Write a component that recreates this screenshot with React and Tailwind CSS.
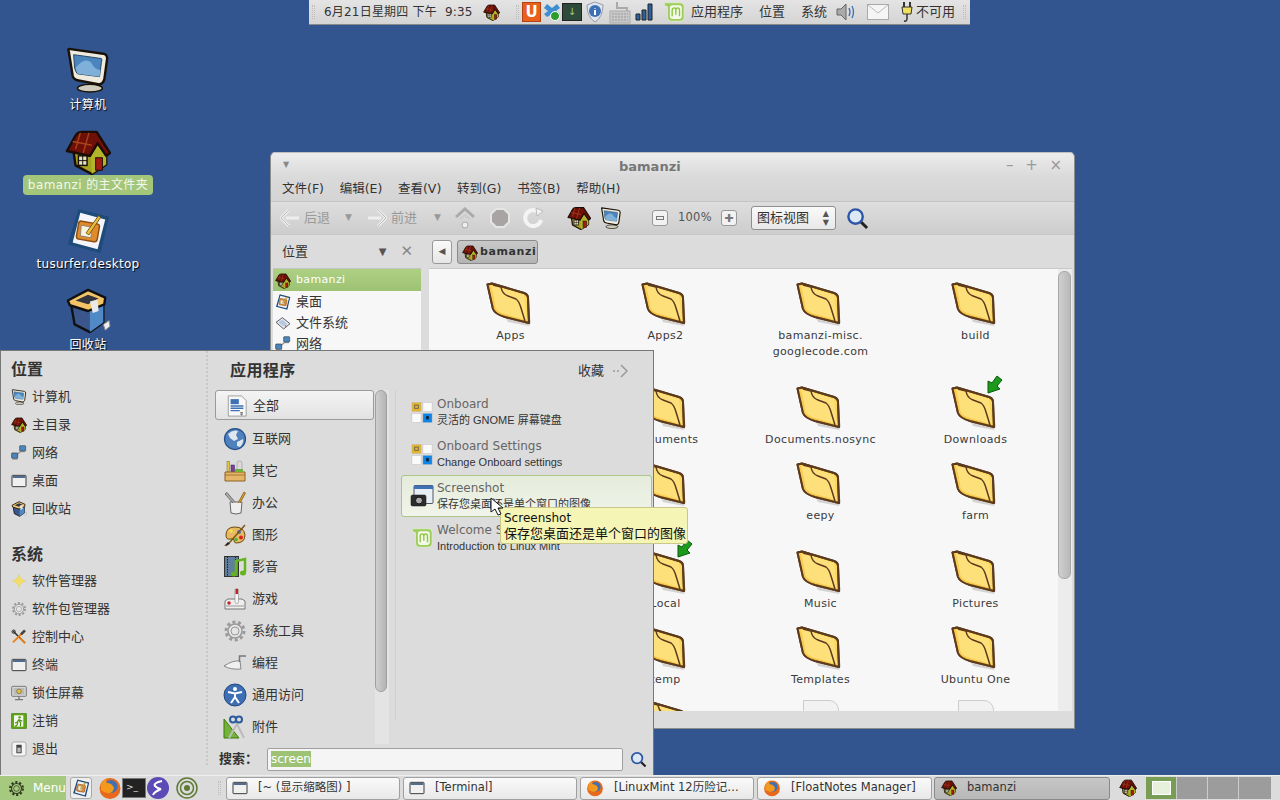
const Svg = ({ size = 16, w, h, className = "", children }) => (
  <svg width={w || size} height={h || size} viewBox="0 0 48 48" className={`shrink-0 ${className}`}>
    {children}
  </svg>
);

// folder from the gnome-colors style theme
const FolderIcon = () => (
  <svg width="46" height="44" viewBox="0 0 46 44" className="shrink-0">
    <path d="M5 5 L40 16 L45 40 L43 44 L22 40 Z" fill="#bbb" opacity=".6" />
    <path d="M1.5 2.5 L6 1.5 L38 11 Q42 12.5 42 16 L43 41 L19 35 Q9 32 7 27 Z" fill="#fbd75b" stroke="#5c3a1e" strokeWidth="2" strokeLinejoin="round" />
    <path d="M3 4 L12 5 L38 13 L41 39 L20 33 Q10 30 8 26 Z" fill="#fde07a" />
    <path d="M3 3 Q5 8 7 20 L8 26 Q10 31 20 34 L41 40" fill="none" stroke="#f7c23e" strokeWidth="3" opacity=".7" />
    <path d="M7 3 L15 5 Q16 12 22 14 L30 17 Q33 19 35 26 L39 39" fill="none" stroke="#5c3a1e" strokeWidth="1.5" />
    <path d="M1.5 2.5 L6 1.5 L38 11 Q42 12.5 42 16 L43 41 L19 35 Q9 32 7 27 Z" fill="none" stroke="#5c3a1e" strokeWidth="2" strokeLinejoin="round" />
  </svg>
);

const ArrowBadge = ({ className = "" }) => (
  <svg width="17" height="19" viewBox="0 0 17 19" className={className}>
    <path d="M11 1 L16 5 L11 11 L14 14 L2 18 L2 6 L6 8 Z" fill="#1c9a1c" stroke="#0b5a0b" strokeWidth="1" />
  </svg>
);

const HouseIcon = ({ size = 16 }) => (
  <Svg size={size}>
    <path d="M9 24 L26 28 L34 14 L43 27 V37 L28 47 L11 38 Z" fill="#a3a321" stroke="#1a0d05" strokeWidth="2.5" strokeLinejoin="round" />
    <path d="M28 47 L27 29 L34 16 L43 27 V37 Z" fill="#b4b42a" />
    <path d="M2 23 L11 7 Q13 3 18 3 L33 3 L47 25 L43 28 L34 15 L26 28 Z" fill="#6e0f08" stroke="#1a0d05" strokeWidth="2.5" strokeLinejoin="round" />
    <path d="M8 13 L28 17 M16 4 L11 21 M25 4 L19 25" stroke="#a8431a" strokeWidth="1.5" />
    <rect x="14" y="28" width="9" height="10" fill="#dfe6c8" stroke="#1a0d05" strokeWidth="1.5" />
    <path d="M18.5 28 V38 M14 33 H23" stroke="#1a0d05" strokeWidth="1" />
    <rect x="32" y="30" width="7" height="13" fill="#a31b12" stroke="#1a0d05" strokeWidth="1" />
  </Svg>
);

const MonitorIcon = ({ size = 16 }) => (
  <Svg size={size}>
    <ellipse cx="26" cy="43" rx="13" ry="4" fill="#cfccbd" stroke="#1a1208" strokeWidth="1.5" />
    <path d="M4 2 Q3 2 4 5 L8 30 Q9 34 14 35 L36 39 Q40 38 41 34 L44 12 Q44 8 40 7 Z" fill="#efecdf" stroke="#1a1208" strokeWidth="2.5" strokeLinejoin="round" />
    <path d="M9 8 L38 12 Q39 13 38 16 L36 31 L13 28 Q11 26 10 22 Z" fill="#4a86bd" stroke="#28435f" strokeWidth="1" />
    <path d="M11 22 Q20 10 27 16 Q31 24 37 24 L36 31 L13 28 Z" fill="#7fb0d9" />
  </Svg>
);

const NoteIcon = ({ size = 16 }) => (
  <Svg size={size}>
    <path d="M14 1 L46 9 L37 47 L3 38 Z" fill="#1d4b7a" />
    <path d="M16 5 L42 12 L34 43 L8 36 Z" fill="#f3f5fb" />
    <rect x="13" y="15" width="22" height="19" rx="3" fill="#e08a2c" stroke="#8b4f12" strokeWidth="1.5" transform="rotate(10 24 24)" />
    <path d="M17 18 L28 20 L27 31 L16 29 Z" fill="#f7f2dd" stroke="#777" strokeWidth=".8" />
    <path d="M22 26 L35 8 L37 10 L25 28 Z" fill="#e9c142" stroke="#7d5514" strokeWidth="1" />
  </Svg>
);

const TrashIcon = ({ size = 16 }) => (
  <Svg size={size}>
    <path d="M6 15 L10 38 L26 46 L40 36 L40 14 Z" fill="#3b568d" stroke="#111" strokeWidth="2.5" strokeLinejoin="round" />
    <path d="M26 22 L40 14 L40 36 L26 46 Z" fill="#4f8ac6" />
    <path d="M3 13 L24 2 L42 10 L41 17 L24 24 L5 18 Z" fill="#f3c566" stroke="#111" strokeWidth="2.5" strokeLinejoin="round" />
    <path d="M11 13 L24 7 L35 11 L24 17 Z" fill="#33363e" />
    <path d="M26 14 L34 12 L35 24 L29 26 Z" fill="#e9e9e9" />
    <path d="M40 38 L46 34 L47 40 L42 44 Z" fill="#eee" stroke="#888" />
  </Svg>
);

const NetworkIcon = ({ size = 16 }) => (
  <Svg size={size}>
    <path d="M14 32 L34 14" stroke="#999" strokeWidth="4" />
    <rect x="26" y="2" width="18" height="16" rx="2" fill="#4a86bd" stroke="#444" strokeWidth="2" />
    <rect x="2" y="24" width="18" height="16" rx="2" fill="#4a86bd" stroke="#333" strokeWidth="2" />
    <path d="M4 42 H20 M28 20 H42" stroke="#777" strokeWidth="3" />
  </Svg>
);

const WindowIcon = ({ size = 16 }) => (
  <Svg size={size}>
    <rect x="3" y="7" width="42" height="34" rx="2" fill="#f0f0f0" stroke="#3c3c3c" strokeWidth="3" />
    <rect x="5" y="9" width="38" height="6" fill="#4f6d8e" />
  </Svg>
);

const DriveIcon = ({ size = 16 }) => (
  <Svg size={size}>
    <path d="M3 22 L22 8 L45 26 L26 42 Z" fill="#dfe6ee" stroke="#445" strokeWidth="2.5" strokeLinejoin="round" />
    <path d="M10 22 L22 14 L36 26 L26 34 Z" fill="#b7c7dc" />
    <circle cx="32" cy="33" r="2" fill="#d22" />
  </Svg>
);

const StarIcon = ({ size = 16 }) => (
  <Svg size={size}>
    <path d="M24 4 Q26 18 44 24 Q26 30 24 44 Q22 30 4 24 Q22 18 24 4 Z" fill="#f4dc6a" stroke="#dcc45a" strokeWidth="1" />
  </Svg>
);

const GearIcon = ({ size = 16, color = "#9a9a9a", fill = "#e5e5e5" }) => (
  <Svg size={size}>
    <circle cx="24" cy="24" r="18" fill="none" stroke={color} strokeWidth="6" strokeDasharray="6 5.3" />
    <circle cx="24" cy="24" r="14" fill={fill} stroke={color} strokeWidth="3" />
    <circle cx="24" cy="24" r="8" fill={fill} stroke={color} strokeWidth="2" />
  </Svg>
);

const ToolsIcon = ({ size = 16 }) => (
  <Svg size={size}>
    <path d="M6 6 L42 42" stroke="#333" strokeWidth="5" />
    <path d="M26 26 L42 42" stroke="#e8831e" strokeWidth="6" />
    <path d="M40 6 L6 40" stroke="#e8831e" strokeWidth="6" />
    <path d="M42 4 L30 16" stroke="#444" strokeWidth="8" />
    <circle cx="8" cy="8" r="5" fill="none" stroke="#333" strokeWidth="3" />
  </Svg>
);

const LockIcon = ({ size = 16 }) => (
  <Svg size={size}>
    <rect x="2" y="4" width="44" height="30" rx="3" fill="#d6d6d6" stroke="#666" strokeWidth="2.5" />
    <rect x="8" y="9" width="32" height="20" fill="#bbb" />
    <circle cx="24" cy="19" r="7" fill="#e6c030" stroke="#665" strokeWidth="2" />
    <path d="M24 34 V42 M12 44 H36" stroke="#777" strokeWidth="4" />
  </Svg>
);

const ExitIcon = ({ size = 16 }) => (
  <Svg size={size}>
    <rect x="2" y="2" width="44" height="44" fill="#5ea510" stroke="#3d7a08" strokeWidth="2" />
    <rect x="9" y="7" width="28" height="34" fill="#f4f8ec" />
    <circle cx="26" cy="13" r="3.5" fill="#4d9310" />
    <path d="M25 18 L18 28 L12 30 M24 22 L29 30 L28 40 M21 28 L17 38 L11 40 M26 21 L34 25" stroke="#4d9310" strokeWidth="3.5" fill="none" />
  </Svg>
);

const SwitchIcon = ({ size = 16 }) => (
  <Svg size={size}>
    <rect x="3" y="3" width="42" height="42" rx="6" fill="#f4f4f4" stroke="#8d8d8d" strokeWidth="2" />
    <rect x="16" y="11" width="16" height="26" rx="2" fill="#444" />
    <rect x="19" y="20" width="10" height="14" fill="#bbb" />
  </Svg>
);

const DocIcon = ({ size = 24 }) => (
  <Svg size={size}>
    <path d="M5 2 H34 L44 12 V46 H5 Z" fill="#f8f8f8" stroke="#999" strokeWidth="2" />
    <rect x="10" y="9" width="18" height="11" fill="#3e71b4" />
    <path d="M10 24 H38 M10 29 H38 M10 34 H30" stroke="#3e71b4" strokeWidth="3" />
    <path d="M31 39 H37 M32 43 H36" stroke="#222" strokeWidth="2" />
  </Svg>
);

const GlobeIcon = ({ size = 24 }) => (
  <Svg size={size}>
    <circle cx="24" cy="24" r="21" fill="#4f82bc" stroke="#27508a" strokeWidth="2.5" />
    <path d="M10 14 Q20 4 30 8 L26 16 L30 24 L22 28 L14 22 Z M28 30 L40 24 Q42 32 34 40 L28 38 Z" fill="#dfe6ee" />
  </Svg>
);

const BoxToolsIcon = ({ size = 24 }) => (
  <Svg size={size}>
    <rect x="8" y="5" width="5" height="20" fill="#e4c93c" stroke="#7a6a1e" />
    <rect x="16" y="12" width="7" height="14" fill="#7a3f9c" stroke="#40205a" />
    <rect x="28" y="4" width="10" height="22" rx="4" fill="#d9d9d9" stroke="#888" />
    <path d="M4 26 H44 V44 H4 Z" fill="#e6b567" stroke="#8c6323" strokeWidth="2" />
    <path d="M4 32 H44" stroke="#8c6323" strokeWidth="1.5" />
    <rect x="24" y="20" width="16" height="6" fill="#6fb33c" />
  </Svg>
);

const OfficeIcon = ({ size = 24 }) => (
  <Svg size={size}>
    <path d="M14 22 H38 L36 44 Q26 48 16 44 Z" fill="#eee" stroke="#666" strokeWidth="2" />
    <path d="M20 24 L4 6 L8 3 L24 22" fill="#aaa" stroke="#555" strokeWidth="1.5" />
    <path d="M30 24 L42 2 L45 4 L34 24" fill="#e0a030" stroke="#7d5514" strokeWidth="1.5" />
  </Svg>
);

const PaletteIcon = ({ size = 24 }) => (
  <Svg size={size}>
    <path d="M6 24 Q6 8 24 8 Q42 8 44 24 Q44 40 26 40 Q22 40 22 34 Q20 30 14 32 Q6 34 6 24 Z" fill="#e7b962" stroke="#6e4a12" strokeWidth="2" />
    <circle cx="32" cy="18" r="4" fill="#3d7ec4" /><circle cx="36" cy="29" r="4" fill="#d22" /><circle cx="26" cy="33" r="3.5" fill="#4bb33a" /><circle cx="16" cy="16" r="3.5" fill="#f3e04b" />
    <path d="M6 46 L14 38 L44 4" stroke="#7d5514" strokeWidth="3" fill="none" /><path d="M2 46 L10 38 L14 42 Z" fill="#222" />
  </Svg>
);

const FilmIcon = ({ size = 24 }) => (
  <Svg size={size}>
    <rect x="3" y="3" width="28" height="40" fill="#5f7f9c" stroke="#333" strokeWidth="2" />
    <path d="M9 3 V43 M25 3 V43" stroke="#222" strokeWidth="2" strokeDasharray="3 2" />
    <path d="M26 34 L26 12 L44 8 V34" fill="none" stroke="#65b41c" strokeWidth="5" />
    <ellipse cx="22" cy="38" rx="6" ry="5" fill="#65b41c" /><ellipse cx="40" cy="36" rx="6" ry="5" fill="#65b41c" />
  </Svg>
);

const JoystickIcon = ({ size = 24 }) => (
  <Svg size={size}>
    <path d="M4 28 L10 24 H38 L44 28 V44 H4 Z" fill="#eee" stroke="#777" strokeWidth="2" />
    <rect x="24" y="3" width="7" height="30" rx="3" fill="#f4f4f4" stroke="#777" />
    <rect x="25" y="4" width="5" height="10" fill="#c82020" />
    <circle cx="12" cy="32" r="3.5" fill="#c82020" />
    <path d="M6 38 H42" stroke="#999" strokeWidth="2" />
  </Svg>
);

const TrowelIcon = ({ size = 24 }) => (
  <Svg size={size}>
    <path d="M2 30 Q20 18 34 20 L36 36 Q16 38 2 30 Z" fill="#f0f0f0" stroke="#888" strokeWidth="2" />
    <path d="M33 22 L33 10 H46" fill="none" stroke="#777" strokeWidth="3" />
  </Svg>
);

const AccessIcon = ({ size = 24 }) => (
  <Svg size={size}>
    <circle cx="24" cy="24" r="22" fill="#3e6fb4" stroke="#24477e" strokeWidth="2" />
    <circle cx="24" cy="12" r="4" fill="#fff" />
    <path d="M10 18 L24 21 L38 18 M24 21 V28 L16 40 M24 28 L32 40" stroke="#fff" strokeWidth="4" fill="none" />
  </Svg>
);

const AccessoryIcon = ({ size = 24 }) => (
  <Svg size={size}>
    <path d="M2 8 L32 46 H2 Z" fill="#73b33a" stroke="#3d7a08" strokeWidth="2" />
    <path d="M30 14 L12 46 M26 14 L42 46" stroke="#bbb" strokeWidth="4" />
    <circle cx="32" cy="9" r="6" fill="none" stroke="#2c5c9c" strokeWidth="4" /><circle cx="20" cy="9" r="6" fill="none" stroke="#2c5c9c" strokeWidth="4" />
  </Svg>
);

const OnboardIcon = ({ size = 22 }) => (
  <Svg size={size}>
    <rect x="2" y="3" width="20" height="20" fill="#e5b42c" stroke="#bbb" />
    <rect x="8" y="9" width="8" height="7" fill="none" stroke="#665" strokeWidth="2" />
    <rect x="26" y="3" width="20" height="20" fill="#fafafa" stroke="#bbb" />
    <rect x="2" y="27" width="20" height="20" fill="#fafafa" stroke="#bbb" />
    <rect x="26" y="27" width="20" height="20" fill="#0d84e8" stroke="#bbb" />
    <rect x="33" y="33" width="6" height="7" fill="#123" />
  </Svg>
);

const CameraIcon = ({ size = 24 }) => (
  <Svg size={size}>
    <rect x="8" y="3" width="38" height="36" rx="2" fill="#e8eef5" stroke="#556" strokeWidth="2" />
    <rect x="8" y="3" width="38" height="7" fill="#3e71b4" />
    <rect x="2" y="22" width="30" height="22" rx="3" fill="#2c2c2c" stroke="#111" />
    <circle cx="18" cy="33" r="7" fill="#aaa" stroke="#111" strokeWidth="2" />
  </Svg>
);

const MintIcon = ({ size = 22 }) => (
  <Svg size={size}>
    <path d="M3 4 H37 Q46 4 46 13 V35 Q46 44 37 44 H18 Q10 44 10 36 V14 Q10 11 7 11 H3 Z" fill="#9ccc5a" stroke="#e8f3d8" strokeWidth="1.5" />
    <rect x="15" y="9" width="26" height="30" rx="5" fill="#f4f9ea" />
    <path d="M20 33 V20 Q20 15 24.5 15 Q28 15 28 20 V30 M28 20 Q28 15 32 15 Q36 15 36 20 V33" fill="none" stroke="#8cc63f" strokeWidth="3" />
  </Svg>
);

const SearchIcon = ({ size = 24 }) => (
  <Svg size={size}>
    <path d="M30 30 L44 44" stroke="#222" strokeWidth="6" />
    <circle cx="20" cy="20" r="15" fill="#dde8f5" stroke="#2d57a6" strokeWidth="5" />
  </Svg>
);

const FirefoxIcon = ({ size = 24 }) => (
  <Svg size={size}>
    <circle cx="24" cy="25" r="21" fill="#e8691b" />
    <circle cx="26" cy="21" r="13" fill="#3e71b4" />
    <path d="M6 28 Q4 10 18 4 Q14 10 18 14 Q28 14 32 24 Q30 36 18 34 Q10 32 6 28 Z" fill="#f39a1e" />
  </Svg>
);

const HANDLE = (
  <div className="w-[3px] h-[14px] border-y-0 border-x border-[#bdbdbd] border-dotted shrink-0" />
);

const desktopIcons = [
  { icon: <MonitorIcon size={46} />, label: "计算机", h: "h-[82px]", mt: "mt-[4px]" },
  { icon: <HouseIcon size={46} />, label: "bamanzi 的主文件夹", h: "h-[79px]", selected: true },
  { icon: <NoteIcon size={46} />, label: "tusurfer.desktop", h: "h-[80px]", mt: "mt-[2px]" },
  { icon: <TrashIcon size={46} />, label: "回收站", h: "h-[70px]", mt: "mt-[3px]" },
];

// the first column is hidden by the menu below the first row
const rows = [
  { cells: ["Apps", "Apps2", "bamanzi-misc.\ngooglecode.com", "build"] },
  { cells: [null, "Documents", "Documents.nosync", "Downloads"], badge: 3 },
  { cells: [null, "dev-kit", "eepy", "farm"] },
  { cells: [null, "Local", "Music", "Pictures"], badge: 1 },
  { cells: [null, "temp", "Templates", "Ubuntu One"] },
];

const places = [
  [<MonitorIcon />, "计算机"],
  [<HouseIcon />, "主目录"],
  [<NetworkIcon />, "网络"],
  [<WindowIcon />, "桌面"],
  [<TrashIcon />, "回收站"],
];

const system = [
  [<StarIcon />, "软件管理器"],
  [<GearIcon />, "软件包管理器"],
  [<ToolsIcon />, "控制中心"],
  [<WindowIcon />, "终端"],
  [<LockIcon />, "锁住屏幕"],
  [<ExitIcon />, "注销"],
  [<SwitchIcon />, "退出"],
];

const categories = [
  [<GlobeIcon />, "互联网"],
  [<BoxToolsIcon />, "其它"],
  [<OfficeIcon />, "办公"],
  [<PaletteIcon />, "图形"],
  [<FilmIcon />, "影音"],
  [<JoystickIcon />, "游戏"],
  [<GearIcon size={24} />, "系统工具"],
  [<TrowelIcon />, "编程"],
  [<AccessIcon />, "通用访问"],
  [<AccessoryIcon />, "附件"],
];

const tasks = [
  { icon: <WindowIcon />, label: "[~ (显示缩略图) ]", w: "w-[174px]" },
  { icon: <WindowIcon />, label: "[Terminal]", w: "w-[174px]" },
  { icon: <FirefoxIcon size={18} />, label: "[LinuxMint 12历险记…", w: "w-[174px]" },
  { icon: <FirefoxIcon size={18} />, label: "[FloatNotes Manager]", w: "w-[175px]" },
];

function TopPanel() {
  return (
    <div className="absolute left-[309px] top-0 w-[661px] h-[25px] bg-linear-to-b from-[#e4e4e4] to-[#d4d4d4] border-b border-[#8a8a8a] flex items-center text-[12px] text-[#333] pl-[3px] whitespace-nowrap">
      {HANDLE}
      <span className="ml-[9px] w-[151px] tracking-[0.2px]">6月21日星期四 下午&nbsp;&nbsp;9:35</span>
      <span className="w-[8px]" />
      <HouseIcon size={17} />
      <span className="ml-[16px]">{HANDLE}</span>
      <span className="ml-[3px] w-[19px] h-[20px] bg-[#e8601c] border border-[#b34310] text-white font-bold text-[15px] leading-[18px] text-center">U</span>
      <svg width="18" height="20" viewBox="0 0 18 20" className="ml-[2px] shrink-0">
        <path d="M4 2 L9 6 L14 2 L17 6 L13 9 L17 12 L14 15 L9 12 L4 15 L1 12 L5 9 L1 6 Z" fill="#3d8fd1" />
        <circle cx="12" cy="14" r="4.5" fill="#2c9c2c" stroke="#fff" />
      </svg>
      <span className="ml-[1px] w-[20px] h-[18px] bg-[#2e4a3a] border border-[#222] text-[#9fd07f] text-[10px] leading-[16px] text-center">↓</span>
      <svg width="18" height="22" viewBox="0 0 18 22" className="ml-[4px] shrink-0">
        <path d="M9 1 L17 4 Q17 16 9 21 Q1 16 1 4 Z" fill="#dfe6ee" stroke="#99a" />
        <circle cx="9" cy="10" r="6" fill="#3e71b4" />
        <path d="M9 7 V7.5 M9 9 V14" stroke="#fff" strokeWidth="2" />
      </svg>
      <svg width="22" height="23" viewBox="0 0 22 23" className="ml-[5px] shrink-0">
        <path d="M8 1 V7 H18 V11" fill="none" stroke="#aaa" strokeWidth="2" />
        <rect x="1" y="10" width="20" height="12" fill="#c8c8c8" stroke="#aaa" />
        <path d="M3 13 H19 M3 16 H19 M3 19 H19" stroke="#999" strokeDasharray="2 1" />
      </svg>
      <svg width="19" height="18" viewBox="0 0 19 18" className="ml-[4px] shrink-0">
        <path d="M1 17 V11 H5 V17 Z M7 17 V7 H11 V17 Z M13 17 V1 H17 V17 Z" fill="#2f5f9c" stroke="#222" />
      </svg>
      <span className="ml-[9px]"><MintIcon size={22} /></span>
      <span className="ml-[6px] text-[13px]">应用程序</span>
      <span className="ml-[16px] text-[13px]">位置</span>
      <span className="ml-[16px] text-[13px]">系统</span>
      <svg width="22" height="22" viewBox="0 0 22 22" className="ml-[9px] shrink-0">
        <path d="M1 8 H5 L10 3 V19 L5 14 H1 Z" fill="#aaa" stroke="#666" />
        <path d="M13 7 Q15 11 13 15 M16 5 Q19 11 16 17" fill="none" stroke="#3e71b4" strokeWidth="1.3" />
      </svg>
      <svg width="22" height="16" viewBox="0 0 22 16" className="ml-[9px] shrink-0">
        <rect x=".5" y=".5" width="21" height="15" fill="#f5f5f5" stroke="#aaa" />
        <path d="M1 1 L11 9 L21 1" fill="none" stroke="#bbb" />
      </svg>
      <svg width="14" height="22" viewBox="0 0 14 22" className="ml-[11px] shrink-0">
        <path d="M4 1 V6 M10 1 V6" stroke="#333" strokeWidth="2" />
        <path d="M2 6 H12 L11 13 H3 Z" fill="#f0e060" stroke="#333" />
        <path d="M7 13 V17 Q7 21 4 20" fill="none" stroke="#333" strokeWidth="1.5" />
      </svg>
      <span className="ml-[2px] text-[13px]">不可用</span>
      <span className="ml-[8px]">{HANDLE}</span>
    </div>
  );
}

function FolderCell({ label, badge }) {
  return (
    <div className="flex flex-col items-center">
      <div className="relative mr-[4px]">
        <FolderIcon />
        {badge && <ArrowBadge className="absolute left-[35px] top-[-11px]" />}
      </div>
      <div className="mt-[2px] text-center whitespace-pre-line leading-[16px] text-[11px] tracking-[0.35px] text-[#3a3a3a]">
        {label}
      </div>
    </div>
  );
}

function FileManager() {
  return (
    <div className="absolute left-[270px] top-[152px] w-[805px] h-[577px] bg-[#dcdcdc] border border-[#8c8c8c] border-t-[#c0c0c0] rounded-t-[5px] flex flex-col text-[#333]">
      <div className="h-[24px] bg-linear-to-b from-[#ececec] to-[#dadada] flex items-center pl-[12px] pr-[12px] rounded-t-[5px]">
        <span className="text-[#888] text-[8px] w-[336px]">▼</span>
        <span className="text-[13px] font-bold text-[#777] pt-[3px]">bamanzi</span>
        <span className="ml-auto text-[#999] text-[15px] w-[58px] flex justify-between pl-[2px]">
          <span>–</span><span>+</span><span>×</span>
        </span>
      </div>
      <div className="h-[25px] bg-linear-to-b from-[#dadada] to-[#d4d4d4] border-b border-[#c4c4c4] flex items-center gap-[15.7px] px-[11px] text-[12.5px]">
        {["文件(F)", "编辑(E)", "查看(V)", "转到(G)", "书签(B)", "帮助(H)"].map((m) => (
          <span key={m}>{m}</span>
        ))}
      </div>
      <div className="h-[33px] bg-linear-to-b from-[#dedede] to-[#cdcdcd] border-b border-[#c8c8c8] flex items-center pl-[9px] text-[12px] text-[#999] whitespace-nowrap">
        <svg width="20" height="20" viewBox="0 0 20 20" className="shrink-0"><path d="M9 2 L1 10 L9 18 M6 10 H19" fill="none" stroke="#eee" strokeWidth="3" /><path d="M9 2 L1 10 L9 18" fill="none" stroke="#bbb" /></svg>
        <span className="ml-[4px] text-[13px]">后退</span>
        <span className="ml-[15px] text-[9px]">▼</span>
        <svg width="20" height="20" viewBox="0 0 20 20" className="ml-[15px] shrink-0"><path d="M11 2 L19 10 L11 18 M1 10 H14" fill="none" stroke="#eee" strokeWidth="3" /><path d="M11 2 L19 10 L11 18" fill="none" stroke="#bbb" /></svg>
        <span className="ml-[4px] text-[13px]">前进</span>
        <span className="ml-[17px] text-[9px]">▼</span>
        <svg width="20" height="22" viewBox="0 0 20 22" className="ml-[14px] shrink-0"><path d="M1 10 L10 2 L19 10" fill="none" stroke="#aaa" strokeWidth="3" /><circle cx="10" cy="18" r="3" fill="#eee" stroke="#aaa" /><path d="M5 12 L10 8 L15 12" fill="none" stroke="#ccc" strokeWidth="2" /></svg>
        <svg width="20" height="20" viewBox="0 0 20 20" className="ml-[15px] shrink-0"><path d="M6 1 H14 L19 6 V14 L14 19 H6 L1 14 V6 Z" fill="#a9a4a4" stroke="#e5e5e5" strokeWidth="2" /></svg>
        <svg width="22" height="22" viewBox="0 0 22 22" className="ml-[13px] shrink-0"><path d="M18 13 A8 8 0 1 1 14 4" fill="none" stroke="#f4f4f4" strokeWidth="4" /><path d="M13 1 L20 4 L14 9 Z" fill="#f4f4f4" stroke="#bbb" /></svg>
        <span className="ml-[22px]"><HouseIcon size={24} /></span>
        <span className="ml-[9px]"><MonitorIcon size={22} /></span>
        <span className="ml-[30px] w-[16px] h-[16px] bg-[#f2f2f2] border border-[#999] rounded-[3px] flex items-center justify-center"><span className="w-[8px] h-[4px] border border-[#777]" /></span>
        <span className="ml-[10px] text-[11.5px] text-[#555] tracking-[0.3px]">100%</span>
        <span className="ml-[9px] w-[16px] h-[16px] bg-[#f2f2f2] border border-[#999] rounded-[3px] flex items-center justify-center text-[11px] leading-none text-[#777]">✚</span>
        <div className="ml-[14px] w-[85px] h-[24px] bg-linear-to-b from-[#fafafa] to-[#e8e8e8] border border-[#8f8f8f] rounded-[3px] flex items-center justify-between pl-[5px] pr-[6px] text-[13px] text-[#333]">
          图标视图
          <span className="text-[8px] leading-[9px] text-[#555] text-center">▲<br />▼</span>
        </div>
        <span className="ml-[10px]"><SearchIcon size={23} /></span>
      </div>
      <div className="flex-1 flex min-h-0 pl-[2px] pr-[2px]">
        <div className="w-[148px] flex flex-col shrink-0">
          <div className="h-[33px] flex items-center pl-[9px] pr-[8px] text-[13px]">
            <span className="flex-1">位置</span>
            <span className="text-[#555] text-[10px]">▼</span>
            <span className="ml-[14px] text-[#888] text-[15px] font-bold">✕</span>
          </div>
          <div className="flex-1 bg-[#f7f7f7] border-t border-[#c4c4c4] text-[13px]">
            <div className="h-[22px] bg-linear-to-b from-[#add083] to-[#9ec274] text-white flex items-center pl-[2px] gap-[5px] tracking-[0.35px] text-[11px] pt-[1px]"><HouseIcon />bamanzi</div>
            <div className="h-[21px] flex items-center pl-[2px] gap-[5px]"><NoteIcon />桌面</div>
            <div className="h-[21px] flex items-center pl-[2px] gap-[5px]"><DriveIcon />文件系统</div>
            <div className="h-[21px] flex items-center pl-[2px] gap-[5px]"><NetworkIcon />网络</div>
          </div>
        </div>
        <div className="flex-1 flex flex-col min-w-0 ml-[8px]">
          <div className="h-[33px] flex items-center pl-[3px] gap-[5px]">
            <span className="w-[20px] h-[24px] bg-linear-to-b from-[#fafafa] to-[#e6e6e6] border border-[#999] rounded-[3px] flex items-center justify-center text-[9px] text-[#555]">◀</span>
            <span className="w-[81px] h-[24px] pt-[2px] bg-linear-to-b from-[#c8c8c8] to-[#b4b4b4] border border-[#8a8a8a] rounded-[3px] flex items-center pl-[4px] gap-[2px] text-[11px] font-bold tracking-[0.6px]"><HouseIcon />bamanzi</span>
          </div>
          <div className="h-[443px] bg-[#f7f7f7] border-t border-[#c8c8c8] flex overflow-hidden">
            <div className="flex-1 pl-[4px] pt-[13px] grid grid-cols-[repeat(4,155px)] grid-rows-[104px_76px_88px_76px_74px_60px]">
              {rows.flatMap((r, i) =>
                r.cells.map((label, c) =>
                  label ? <FolderCell key={`${i}-${c}`} label={label} badge={r.badge === c} /> : <div key={`${i}-${c}`} />,
                ),
              )}
              <div />
              <div className="flex justify-center"><FolderIcon /></div>
              <div className="flex justify-center"><div className="w-[36px] h-[40px] bg-[#f2f2f2] border border-[#ccc] rounded-tr-[10px]" /></div>
              <div className="flex justify-center"><div className="w-[36px] h-[40px] bg-[#f2f2f2] border border-[#ccc] rounded-tr-[10px]" /></div>
            </div>
            <div className="w-[14px] bg-[#ececec] shrink-0 pt-[2px] pr-[1px]">
              <div className="h-[308px] bg-linear-to-r from-[#cfcfcf] to-[#b9b9b9] border border-[#a8a8a8] rounded-[6px]" />
            </div>
          </div>
        </div>
      </div>
      <div className="h-[17px] shrink-0" />
    </div>
  );
}

function MenuRow({ icon, label }) {
  return (
    <div className="h-[28px] flex items-center gap-[5px] text-[13px] text-[#333]">
      {icon}
      {label}
    </div>
  );
}

function AppRow({ icon, name, desc, active }) {
  return (
    <div className={`h-[42px] flex items-center gap-[3px] ${active ? "h-[41px] bg-linear-to-b from-[#e5ecdb] to-[#f0f4ea] border border-[#a9c587] rounded-[3px] pl-[8px]" : "pl-[9px]"}`}>
      <span className="w-[24px] flex justify-center">{icon}</span>
      <div className="leading-[16px] whitespace-nowrap">
        <div className="text-[12px] text-[#666]">{name}</div>
        <div className="text-[11px] text-[#333] font-['Liberation_Sans','Noto_Sans_CJK_SC',sans-serif]">{desc}</div>
      </div>
    </div>
  );
}

function StartMenu() {
  return (
    <div className="absolute left-0 top-[350px] w-[654px] h-[425px] bg-[#dcdcdc] border border-[#777] border-b-0 flex text-[#333]">
      <div className="w-[207px] shrink-0 pl-[10px] pt-[8px] border-r-2 border-dotted border-[#c8c8c8] mb-[10px]">
        <div className="text-[16px] font-bold leading-[22px] mb-[2px]">位置</div>
        {places.map(([icon, label]) => (
          <MenuRow key={label} icon={icon} label={label} />
        ))}
        <div className="text-[16px] font-bold leading-[22px] mt-[21px] mb-[1px]">系统</div>
        {system.map(([icon, label]) => (
          <MenuRow key={label} icon={icon} label={label} />
        ))}
      </div>
      <div className="flex-1 flex flex-col min-w-0 pl-[7px]">
        <div className="h-[39px] flex items-center pl-[15px] pr-[25px] justify-between">
          <span className="text-[16px] font-bold tracking-[0.4px]">应用程序</span>
          <span className="flex items-center gap-[8px] text-[13px]">
            收藏
            <svg width="16" height="14" viewBox="0 0 16 14"><path d="M1 7 H3 M5 7 H7 M9 1 L15 7 L9 13" fill="none" stroke="#999" strokeWidth="1.5" /></svg>
          </span>
        </div>
        <div className="flex-1 flex min-h-0">
          <div className="w-[159px] shrink-0 text-[13px]">
            <div className="h-[30px] pt-[2px] bg-linear-to-b from-[#f4f4f4] to-[#e2e2e2] border border-[#9a9a9a] rounded-[3px] flex items-center gap-[5px] pl-[10px] mb-[3px]">
              <DocIcon size={22} />全部
            </div>
            {categories.map(([icon, label]) => (
              <div key={label} className="h-[32px] flex items-center gap-[5px] pl-[8px]">
                {icon}
                {label}
              </div>
            ))}
          </div>
          <div className="w-[14px] ml-[1px] shrink-0 bg-[#e4e4e4] pr-[2px]">
            <div className="h-[302px] bg-linear-to-r from-[#cfcfcf] to-[#b4b4b4] border border-[#a0a0a0] rounded-[6px]" />
          </div>
          <div className="flex-1 pl-[5px] pr-[1px] border-l border-[#d0d0d0] ml-[6px] mb-[24px] pt-[1px] min-w-0">
            <AppRow icon={<OnboardIcon />} name="Onboard" desc="灵活的 GNOME 屏幕键盘" />
            <AppRow icon={<OnboardIcon />} name="Onboard Settings" desc="Change Onboard settings" />
            <AppRow active icon={<CameraIcon />} name="Screenshot" desc="保存您桌面还是单个窗口的图像" />
            <AppRow icon={<MintIcon />} name="Welcome S" desc="Introduction to Linux Mint" />
          </div>
        </div>
        <div className="h-[30px] flex items-center shrink-0 pl-[4px] mb-[1px]">
          <span className="text-[13px] font-bold w-[48px]">搜索：</span>
          <div className="w-[356px] h-[23px] bg-[#f5f5f5] border border-[#a0a0a0] rounded-[2px] flex items-center pl-[3px]">
            <span className="bg-[#9ec274] text-white text-[12px] leading-[16px]">screen</span>
          </div>
          <span className="ml-[7px]"><SearchIcon size={17} /></span>
        </div>
      </div>
    </div>
  );
}

function Taskbar() {
  return (
    <div className="h-[25px] shrink-0 bg-[#dcdcdc] border-t border-[#eee] flex items-center text-[11.5px] text-[#333] whitespace-nowrap">
      <div className="w-[66px] h-full bg-[#a5c97e] flex items-center pl-[8px] gap-[8px] text-white text-[12px]">
        <GearIcon size={17} color="#2f3a1e" fill="#a5c97e" />
        Menu
      </div>
      <span className="ml-[4px] w-[22px] h-[22px] bg-[#eee] border border-[#aaa] rounded-[3px] flex items-center justify-center"><NoteIcon size={18} /></span>
      <span className="ml-[6px]"><FirefoxIcon /></span>
      <span className="w-[24px] h-[20px] bg-[#222] border border-[#777] text-[#ddd] text-[9px] pl-[3px] leading-[16px]">&gt;_</span>
      <svg width="24" height="24" viewBox="0 0 24 24" className="shrink-0">
        <circle cx="12" cy="12" r="11" fill="#5c4bb5" />
        <path d="M16 5 Q7 7 9 10 Q12 13 15 13 Q8 16 7 19" fill="none" stroke="#fff" strokeWidth="2" />
      </svg>
      <svg width="22" height="22" viewBox="0 0 22 22" className="ml-[6px] shrink-0">
        <circle cx="11" cy="11" r="10" fill="none" stroke="#5d7a35" strokeWidth="1.5" />
        <circle cx="11" cy="11" r="6.5" fill="none" stroke="#5d7a35" strokeWidth="1.5" />
        <circle cx="11" cy="11" r="3" fill="#5d7a35" />
      </svg>
      <span className="ml-[20px]">{HANDLE}</span>
      <div className="ml-[5px] flex gap-[3px]">
        {tasks.map((t) => (
          <div key={t.label} className={`${t.w} h-[23px] bg-linear-to-b from-[#fafafa] to-[#e8e8e8] border border-[#a0a0a0] rounded-[3px] flex items-center pl-[5px] gap-[10px] overflow-hidden`}>
            {t.icon}
            {t.label}
          </div>
        ))}
      </div>
      <div className="ml-[2px] w-[176px] h-[23px] bg-linear-to-b from-[#c6c6c6] to-[#b8b8b8] border border-[#8a8a8a] rounded-[3px] flex items-center pl-[6px] gap-[10px]">
        <HouseIcon />
        bamanzi
      </div>
      <span className="ml-[9px]"><HouseIcon size={18} /></span>
      <div className="ml-[9px] flex h-[22px]">
        <div className="w-[31px] bg-[#7a9d55] flex items-center justify-center border-r border-[#ccc]"><span className="w-[19px] h-[14px] bg-[#e7f0da] border border-white" /></div>
        <div className="w-[31px] bg-[#9c9c9c] border-r border-[#ccc]" />
        <div className="w-[31px] bg-[#9c9c9c] border-r border-[#ccc]" />
        <div className="w-[32px] bg-[#9c9c9c]" />
      </div>
    </div>
  );
}

export default function App() {
  return (
    <div className="w-[1280px] h-[800px] overflow-hidden flex flex-col bg-[#32558f] font-['DejaVu_Sans','Noto_Sans_CJK_SC',sans-serif]">
      <div className="relative flex-1 min-h-0">
        <div className="w-[176px] pt-[47px] flex flex-col items-center text-[12px] text-white [text-shadow:1px_1px_1px_#000]">
          {desktopIcons.map((d) => (
            <div key={d.label} className={`${d.h} flex flex-col items-center`}>
              {d.icon}
              <span className={d.selected ? "px-[5px] leading-[20px] bg-[#a3c67b] rounded-[4px] [text-shadow:none] text-[#f4f8ec] tracking-[0.4px]" : `${d.mt} leading-[16px] tracking-[0.3px]`}>
                {d.label}
              </span>
            </div>
          ))}
        </div>
        <TopPanel />
        <FileManager />
        <StartMenu />
        <div className="absolute left-[500px] top-[507px] w-[188px] h-[37px] bg-[#f5f5b5] border border-[#c8c88a] rounded-[3px] px-[3px] leading-[16px] text-[#111] whitespace-nowrap pt-[2px]">
          <div className="text-[12px]">Screenshot</div>
          <div className="text-[13px]">保存您桌面还是单个窗口的图像</div>
        </div>
        <svg width="16" height="20" viewBox="0 0 16 20" className="absolute left-[490px] top-[497px]">
          <path d="M1 1 V15 L5 12 L8 18 L11 17 L8 11 L13 11 Z" fill="#fff" stroke="#111" />
        </svg>
      </div>
      <Taskbar />
    </div>
  );
}
